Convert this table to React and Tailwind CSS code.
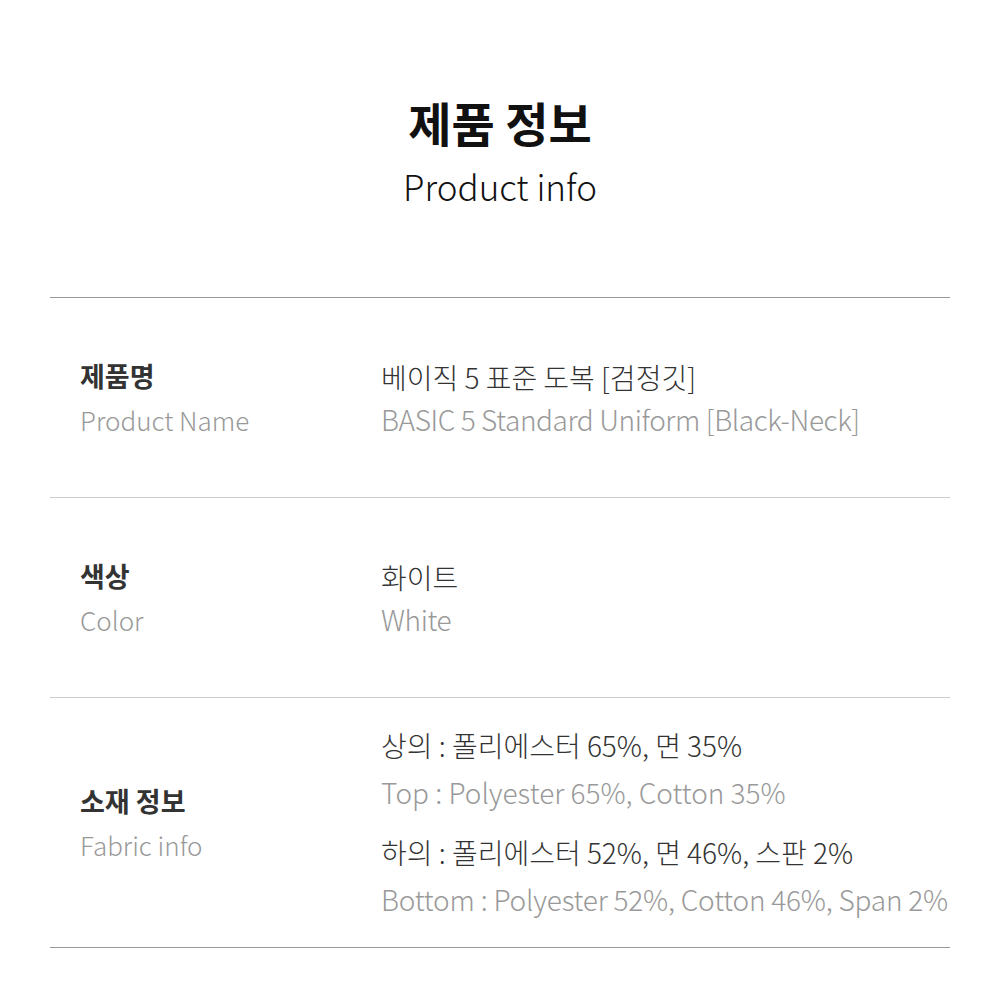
export default function App() {
  const font = { fontFamily: '"Noto Sans CJK KR", "Noto Sans", sans-serif' };
  return (
    <div className="w-[1000px] h-[1000px] bg-white" style={font}>
      <div className="w-[900px] mx-auto">
        <div className="h-[297px] flex flex-col items-center pt-[89px]">
          <h1 className="text-[47px] leading-[66px] font-bold text-[#111]">제품 정보</h1>
          <p className="text-[35px] leading-[50px] font-light text-[#111] mt-[6px]">Product info</p>
        </div>
        <div className="border-t border-[#999]">
          <Row label="제품명" sub="Product Name" h="h-[199px]">
            <div className="text-[28px] leading-[42px] font-light text-[#333]">베이직 5 표준 도복 [검정깃]</div>
            <div className="text-[28px] leading-[42px] font-light text-[#999] tracking-[-0.4px]">BASIC 5 Standard Uniform [Black-Neck]</div>
          </Row>
          <div className="border-t border-[#ccc]" />
          <Row label="색상" sub="Color" h="h-[199px]">
            <div className="text-[28px] leading-[42px] font-light text-[#333]">화이트</div>
            <div className="text-[28px] leading-[42px] font-light text-[#999] tracking-[-0.4px]">White</div>
          </Row>
          <div className="border-t border-[#ccc]" />
          <Row label="소재 정보" sub="Fabric info" h="h-[249px]">
            <div className="text-[28px] leading-[47px] font-light text-[#333]">상의 : 폴리에스터 65%, 면 35%</div>
            <div className="text-[28px] leading-[47px] font-light text-[#999]">Top : Polyester 65%, Cotton 35%</div>
            <div className="text-[28px] leading-[47px] font-light text-[#333] mt-[13px]">하의 : 폴리에스터 52%, 면 46%, 스판 2%</div>
            <div className="text-[28px] leading-[47px] font-light text-[#999] tracking-[-0.2px]">Bottom : Polyester 52%, Cotton 46%, Span 2%</div>
          </Row>
          <div className="border-t border-[#999]" />
        </div>
      </div>
    </div>
  );
}

function Row({ label, sub, h, children }) {
  return (
    <div className={`${h} flex items-center`}>
      <div className="w-[331px] pl-[30px] shrink-0">
        <div className="text-[27px] leading-[44px] font-bold text-[#333]">{label}</div>
        <div className="text-[26px] leading-[44px] font-light text-[#999]">{sub}</div>
      </div>
      <div className="flex flex-col whitespace-nowrap">{children}</div>
    </div>
  );
}
